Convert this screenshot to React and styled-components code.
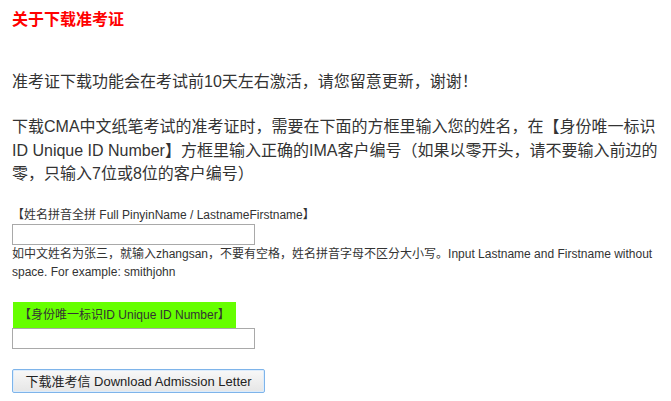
import React from "react";
import styled, { createGlobalStyle } from "styled-components";

const Global = createGlobalStyle`
  html, body { margin: 0; padding: 0; background: #fff; }
  body { font-family: "Liberation Sans", Arial, "Noto Sans CJK SC", sans-serif; color: #333; }
`;

const Page = styled.div`
  padding: 8px 12px 0 12px;
  width: 647px;
`;

const Title = styled.h4`
  margin: 0;
  font-size: 16px;
  line-height: 24px;
  font-weight: bold;
  color: #ff0000;
`;

const Para = styled.p`
  margin: ${(p) => p.$top}px 0 0 0;
  font-size: 16px;
  line-height: 23.5px;
  color: #333;
`;

const Form = styled.div`
  display: flex;
  flex-direction: column;
  align-items: flex-start;
  margin-top: 20px;
`;

const Label = styled.div`
  font-size: 12px;
  line-height: 18px;
  color: #333;
`;

const Field = styled.input`
  box-sizing: border-box;
  width: 243px;
  height: 21px;
  margin: 0;
  padding: 1px 3px;
  border: 1px solid #a9a9a9;
  background: #fff;
  font-size: 12px;
  font-family: inherit;
  outline: none;
`;

const Hint = styled.div`
  font-size: 12px;
  line-height: 18px;
  color: #333;
  width: 647px;
`;

const Highlight = styled.div`
  margin-top: 21px;
  margin-left: 1px;
  background: #66ff00;
  padding: 4px 6px;
  font-size: 12px;
  line-height: 18px;
  color: #333;
`;

const Button = styled.button`
  box-sizing: border-box;
  margin-top: 20px;
  width: 253px;
  height: 24px;
  padding: 0;
  font-family: inherit;
  font-size: 13px;
  color: #222;
  border: 1px solid #7eb4ea;
  box-shadow: inset 0 0 0 1px #dcecfc;
  border-radius: 2px;
  background: linear-gradient(#f8f8f8, #e6e6e6);
  cursor: pointer;
`;

export default function App() {
  return (
    <>
      <Global />
      <Page>
        <Title>关于下载准考证</Title>
        <Para $top={38}>准考证下载功能会在考试前10天左右激活，请您留意更新，谢谢！</Para>
        <Para $top={21.5}>
          下载CMA中文纸笔考试的准考证时，需要在下面的方框里输入您的姓名，在【身份唯一标识ID Unique ID Number】方框里输入正确的IMA客户编号（如果以零开头，请不要输入前边的零，只输入7位或8位的客户编号）
        </Para>
        <Form>
          <Label>【姓名拼音全拼 Full PinyinName / LastnameFirstname】</Label>
          <Field type="text" />
          <Hint>
            如中文姓名为张三，就输入zhangsan，不要有空格，姓名拼音字母不区分大小写。Input Lastname and Firstname without space. For example: smithjohn
          </Hint>
          <Highlight>【身份唯一标识ID Unique ID Number】</Highlight>
          <Field type="text" />
          <Button type="button">下载准考信 Download Admission Letter</Button>
        </Form>
      </Page>
    </>
  );
}
